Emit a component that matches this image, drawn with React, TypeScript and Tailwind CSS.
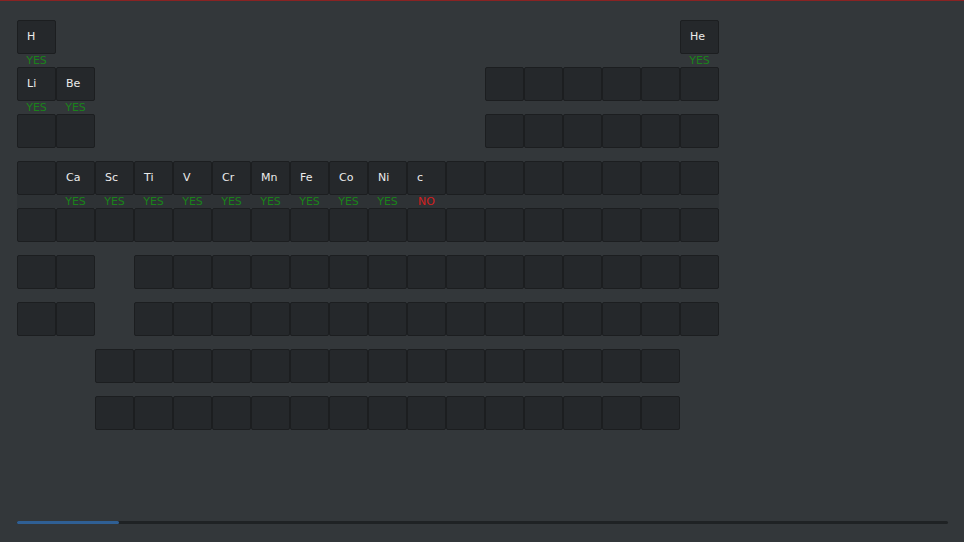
type Slot = { sym?: string; ok?: boolean } | null;

const empty = (): Slot => ({});
const range = (n: number, fn: (i: number) => Slot) => Array.from({ length: n }, (_, i) => fn(i));

const rows: { slots: Slot[]; band?: boolean }[] = [
  { slots: range(18, (i) => (i === 0 ? { sym: "H", ok: true } : i === 17 ? { sym: "He", ok: true } : null)) },
  {
    slots: range(18, (i) =>
      i === 0 ? { sym: "Li", ok: true } : i === 1 ? { sym: "Be", ok: true } : i >= 12 ? empty() : null
    ),
  },
  { slots: range(18, (i) => (i <= 1 || i >= 12 ? empty() : null)) },
  {
    band: true,
    slots: range(18, (i) => {
      const syms = ["", "Ca", "Sc", "Ti", "V", "Cr", "Mn", "Fe", "Co", "Ni", "c"];
      if (i >= 1 && i <= 9) return { sym: syms[i], ok: true };
      if (i === 10) return { sym: "c", ok: false };
      return empty();
    }),
  },
  { slots: range(18, () => empty()) },
  { slots: range(18, (i) => (i === 2 ? null : empty())) },
  { slots: range(18, (i) => (i === 2 ? null : empty())) },
  { slots: range(17, (i) => (i < 2 ? null : empty())) },
  { slots: range(17, (i) => (i < 2 ? null : empty())) },
];

function Cell({ slot }: { slot: Slot }) {
  if (!slot) return <div className="w-[39px] h-[47px] shrink-0" />;
  return (
    <div className="w-[39px] h-[47px] shrink-0 flex flex-col">
      <div className="h-[34px] bg-[#25282b] border border-[#1c1e20] rounded-[2px] flex items-center pl-[9px] pt-[1px] text-[11px] text-[#ececec]">
        {slot.sym}
      </div>
      <div
        className={`h-[13px] leading-[13px] text-center text-[11px] ${
          slot.ok ? "text-[#1a821a]" : "text-[#d42020]"
        }`}
      >
        {slot.sym ? (slot.ok ? "YES" : "NO") : ""}
      </div>
    </div>
  );
}

export default function App() {
  return (
    <div
      className="w-[964px] h-[542px] bg-[#33373a] border-t border-[#8a2323] flex flex-col overflow-hidden"
      style={{ fontFamily: '"DejaVu Sans", sans-serif' }}
    >
      <div className="pl-[17px] pt-[19px] flex flex-col">
        {rows.map((r, ri) => (
          <div key={ri} className="relative flex">
            {r.band && <div className="absolute left-0 w-[702px] top-[34px] h-[13px] bg-[#2e3235]" />}
            {r.slots.map((s, si) => (
              <div key={si} className="relative">
                <Cell slot={s} />
              </div>
            ))}
          </div>
        ))}
      </div>
      <div className="mt-auto mb-[18px] mx-[17px] w-[931px] h-[3px] bg-[#1f2224] rounded-full flex">
        <div className="w-[102px] h-full bg-[#2f5f94] rounded-full" />
      </div>
    </div>
  );
}
